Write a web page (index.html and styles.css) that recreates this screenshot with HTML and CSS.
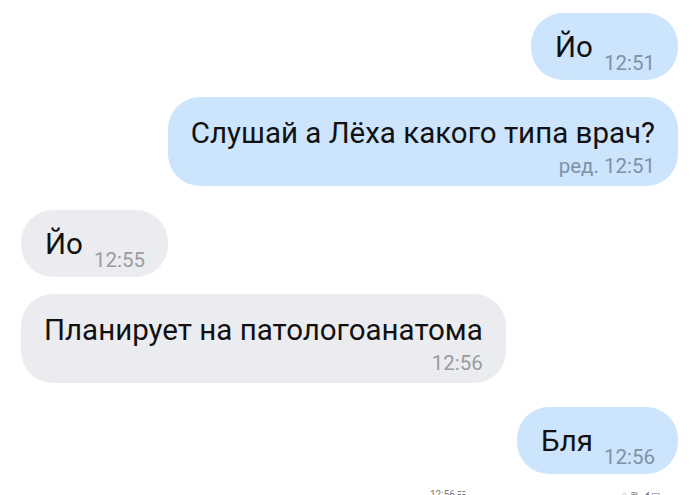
FILE: index.html
```html
<!DOCTYPE html>
<html lang="ru">
<head>
    <meta charset="UTF-8">
    <meta name="viewport" content="width=device-width, initial-scale=1.0">
    <title>Чат</title>
    <link rel="stylesheet" href="styles.css">
</head>
<body>
    <div class="chat">
        <!-- исходящие -->
        <div class="msg out short">
            <span class="text">Йо</span>
            <span class="time">12:51</span>
        </div>
        <div class="msg out long">
            <span class="text">Слушай а Лёха какого типа врач?</span>
            <span class="time">ред. 12:51</span>
        </div>

        <!-- входящие -->
        <div class="msg in short first">
            <span class="text">Йо</span>
            <span class="time">12:55</span>
        </div>
        <div class="msg in long">
            <span class="text">Планирует на патологоанатома</span>
            <span class="time">12:56</span>
        </div>

        <div class="msg out short first">
            <span class="text">Бля</span>
            <span class="time">12:56</span>
        </div>
    </div>

    <div class="statusbar">
        <span class="clock">12:56 ☷</span>
        <span class="icons">⌂ ≋ ◢ ▭</span>
    </div>
</body>
</html>
```

FILE: styles.css
```css
body {
    margin: 0;
    background: #fff;
    font-family: Roboto, "Noto Sans", sans-serif;
    overflow: hidden;
}

.chat {
    display: flex;
    flex-direction: column;
    gap: 17px;
    padding: 13px 22px 0 21px;
}

.msg {
    display: flex;
    border-radius: 32px;
    max-width: 85%;
}

.msg.first {
    margin-top: 7px;
}

.msg.out {
    align-self: flex-end;
    background: #cde4fd;
}

.msg.in {
    align-self: flex-start;
    background: #ebecf0;
}

.text {
    font-size: 29.5px;
    line-height: 34px;
    color: #111;
}

.time {
    font-size: 20.5px;
    line-height: 24px;
}

.out .time {
    color: #8092a6;
}

.in .time {
    color: #9a9b9f;
}

/* короткие сообщения: время справа от текста */
.short {
    flex-direction: row;
    align-items: flex-end;
    gap: 11px;
    padding: 17px 23px 5px 24px;
}

.short .text {
    margin-bottom: 11px;
}

/* длинные: время под текстом */
.long {
    flex-direction: column;
    padding: 19px 23px 8px 23px;
}

.long .time {
    align-self: flex-end;
    margin-top: 4px;
}

.statusbar {
    display: flex;
    justify-content: space-between;
    margin-top: 15px;
    padding: 0 40px 0 430px;
    font-size: 10px;
    color: #777;
}
```
